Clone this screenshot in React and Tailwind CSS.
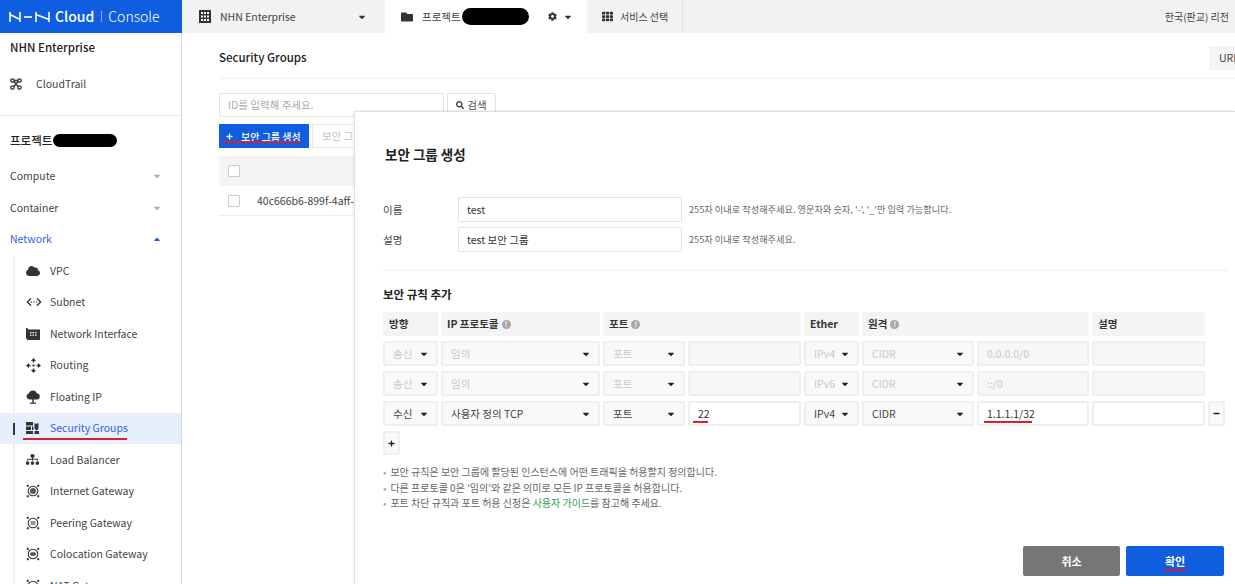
import React from "react";
import { FaCaretDown, FaCaretUp, FaCloud, FaCog, FaFolder, FaMinus, FaPlus, FaSearch, FaSitemap, FaTh } from "react-icons/fa";
import { ChevronsLeftRightEllipsis } from "lucide-react";

const font = { fontFamily: '"Noto Sans CJK KR", "Noto Sans", sans-serif' };

function NhnMark() {
  return (
    <svg width="42" height="12" viewBox="0 0 42 12" fill="none" stroke="white" strokeWidth="1.6">
      <path d="M1 1v10M1 3.500l10 5M11 1v10" />
      <path d="M15 6h8" />
      <path d="M27 1v10M27 3.500l13 5M40 1v10" />
    </svg>
  );
}

function BuildingIcon() {
  return (
    <svg width="12" height="13" viewBox="0 0 12 13" fill="#333">
      <path d="M0 0h12v13H0z" />
      <path fill="white" d="M2 2h2v2H2zM5 2h2v2H5zM8 2h2v2H8zM2 5.500h2v2H2zM5 5.500h2v2H5zM8 5.500h2v2H8zM2 9h2v2H2zM5 9h2v2H5zM8 9h2v2H8z" />
    </svg>
  );
}

function TrailIcon() {
  return (
    <svg width="12" height="12" viewBox="0 0 12 12" fill="none" stroke="#333" strokeWidth="1.300">
      <circle cx="2.500" cy="2.500" r="1.700" />
      <circle cx="9.500" cy="2.500" r="1.700" />
      <circle cx="2.500" cy="9.500" r="1.700" />
      <circle cx="9.500" cy="9.500" r="1.700" />
      <path d="M4 3.500l4 5M8 3.500l-4 5M4.200 2.500h3.600" />
    </svg>
  );
}

function InterfaceIcon() {
  return (
    <svg width="14" height="12" viewBox="0 0 14 12" fill="#333">
      <path d="M0 0h1.500l.5 1.500H14V12H1.500L0 10z" />
      <path fill="white" d="M4 4h1.500v1.200H4zM6.500 4H8v1.200H6.500zM9 4h1.500v1.200H9zM4 6.500h1.500v1.200H4zM6.500 6.500H8v1.200H6.500zM9 6.500h1.500v1.200H9z" />
    </svg>
  );
}

function RoutingIcon() {
  return (
    <svg width="15" height="15" viewBox="0 0 15 15" fill="#333">
      <path d="M7.500 0l2.600 3H8.300v1.500H6.700V3H4.900zM7.500 15l-2.600-3h1.800v-1.500h1.600V12h1.800zM0 7.500l3-2.600v1.800h1.500v1.600H3v1.800zM15 7.500l-3 2.600V8.300h-1.500V6.700H12V4.900z" />
      <rect x="6.500" y="6.500" width="2" height="2" />
    </svg>
  );
}

function FloatingIcon() {
  return (
    <svg width="14" height="14" viewBox="0 0 14 14" fill="#333">
      <path d="M3.500 9.500A3 3 0 0 1 2.800 3.600 4.300 4.300 0 0 1 11 3.500a3 3 0 0 1-.5 6z" />
      <rect x="6.300" y="9" width="1.400" height="4" />
      <rect x="4" y="12.600" width="6" height="1.200" />
    </svg>
  );
}

function SecurityIcon() {
  return (
    <svg width="13" height="12" viewBox="0 0 13 12" fill="#333">
      <path d="M0 0h7v3.500H0zM0 4.500h5V8H0zM0 9h7v3H0zM6 4.500h1.500V8H6z" />
      <path d="M8.500 1l2 1 2-1v4.500c0 1.500-1 2.500-2 3-1-.5-2-1.500-2-3zM8.500 9H13v3H8.500z" />
    </svg>
  );
}

function GatewayIcon({ kind }) {
  return (
    <svg width="14" height="14" viewBox="0 0 14 14" fill="none" stroke="#333">
      <circle cx="7" cy="7" r="4.800" strokeWidth="1.100" />
      <path d="M1 1h1.500v1.500H1zM11.500 1H13v1.500h-1.500zM1 11.500h1.500V13H1zM11.500 11.500H13V13h-1.500z" fill="#333" strokeWidth=".5" />
      {kind === "internet" && <circle cx="7" cy="7" r="2.800" fill="#555" strokeWidth=".4" />}
      {kind === "peering" && <path d="M4.500 6h5M4.500 8h5" strokeWidth="1" />}
      {kind === "colocation" && <rect x="4.200" y="5.500" width="5.600" height="3" rx="1.500" fill="#555" strokeWidth=".4" />}
      {kind === "nat" && <path d="M4.500 7h5" strokeWidth="1.200" />}
    </svg>
  );
}

const groups = [
  { name: "Compute" },
  { name: "Container" },
  { name: "Network", open: true },
];

const networkItems = [
  { name: "VPC", icon: <FaCloud className="text-[14px] text-[#333]" /> },
  { name: "Subnet", icon: <ChevronsLeftRightEllipsis size={16} strokeWidth={2} className="text-[#333]" /> },
  { name: "Network Interface", icon: <InterfaceIcon /> },
  { name: "Routing", icon: <RoutingIcon /> },
  { name: "Floating IP", icon: <FloatingIcon /> },
  { name: "Security Groups", icon: <SecurityIcon />, active: true },
  { name: "Load Balancer", icon: <FaSitemap className="text-[13px] text-[#333]" /> },
  { name: "Internet Gateway", icon: <GatewayIcon kind="internet" /> },
  { name: "Peering Gateway", icon: <GatewayIcon kind="peering" /> },
  { name: "Colocation Gateway", icon: <GatewayIcon kind="colocation" /> },
  { name: "NAT Gateway", icon: <GatewayIcon kind="nat" /> },
];

function Sidebar() {
  return (
    <aside className="w-[182px] shrink-0 border-r border-[#d9d9d9] bg-white text-[10.500px] text-[#444]">
      <div className="pl-[10px] pt-[6px] h-[83px] border-b border-[#e8e8e8]">
        <div className="text-[11.500px] font-medium leading-[16px] text-[#222]">NHN Enterprise</div>
        <div className="mt-[21px] flex items-center leading-[16px]">
          <TrailIcon />
          <span className="ml-[14px]">CloudTrail</span>
        </div>
      </div>
      <div className="pl-[10px] pt-[16px] h-[44.500px] flex items-start">
        <span className="relative text-[11.500px] font-medium leading-[16px] text-[#222]">프로젝트</span>
        <span className="ml-[1px] mt-[2px] h-[13px] w-[64px] rounded-full bg-black" />
      </div>
      {groups.map((g) => (
        <div key={g.name} className="h-[31.500px] pl-[10px] pr-[19px] flex items-center justify-between">
          <span className={g.open ? "text-[#2f62e8]" : ""}>{g.name}</span>
          {g.open ? <FaCaretUp className="text-[10px] text-[#1c5fe0]" /> : <FaCaretDown className="text-[10px] text-[#aaa]" />}
        </div>
      ))}
      <div className="ml-[13px] border-l-2 border-[#f0f0f0]">
        {networkItems.map((it) => (
          <div
            key={it.name}
            className={`relative h-[31.500px] ml-[-15px] pl-[26px] flex items-center ${it.active ? "bg-[#e8effc] text-[#2f62e8]" : ""}`}
          >
            {it.active && <span className="absolute left-[13px] top-[10px] h-[12px] w-[2px] bg-[#333]" />}
            <span className="w-[24px] flex justify-start">{it.icon}</span>
            <span>{it.name}</span>
            {it.active && <span className="absolute left-[23px] top-[25px] h-[2px] w-[104px] bg-[#d5202e]" />}
          </div>
        ))}
      </div>
    </aside>
  );
}

function TopBar() {
  return (
    <header className="h-[33px] flex bg-[#f2f2f2] text-[10.500px] text-[#444] shrink-0">
      <div className="w-[182px] bg-[#0f5ee0] flex items-center pl-[9px] text-white">
        <NhnMark />
        <span className="ml-[4px] text-[14px] font-medium">Cloud</span>
        <span className="ml-[7px] mr-[6px] h-[11px] w-px bg-[#8fb2ee]" />
        <span className="text-[14px] font-light">Console</span>
      </div>
      <div className="w-[203px] flex items-center pl-[17px] pr-[18px]">
        <BuildingIcon />
        <span className="flex-1 ml-[9px]">NHN Enterprise</span>
        <FaCaretDown className="text-[10px] text-[#333]" />
      </div>
      <div className="w-[202px] bg-white flex items-center pl-[16px]">
        <FaFolder className="text-[12px] text-[#333] mr-[9px]" />
        <span>프로젝트</span>
        <span className="h-[17px] w-[67px] rounded-full bg-black ml-[1px]" />
        <FaCog className="ml-[19px] text-[9px] text-[#333]" />
        <FaCaretDown className="ml-[6px] text-[10px] text-[#333]" />
      </div>
      <div className="w-[96px] border-r border-[#e2e2e2] flex items-center pl-[15px] text-[10px]">
        <FaTh className="text-[11px] text-[#333] mr-[7px]" />
        <span>서비스 선택</span>
      </div>
      <div className="flex-1 flex items-center justify-end pr-[6px] text-[10px]">
        <span>한국(판교) 리전</span>
      </div>
    </header>
  );
}

function Background() {
  return (
    <main className="flex-1 min-w-0 pl-[37px] text-[10.500px] text-[#444]">
      <div className="h-[46px] flex items-center justify-between border-b border-[#efefef] pt-[4px]">
        <h1 className="text-[11.500px] font-medium text-[#222]">Security Groups</h1>
        <span className="w-[26px] h-[24px] bg-[#f4f4f4] pl-[10px] leading-[24px] overflow-hidden">URL</span>
      </div>
      <div className="mt-[14px] flex gap-[3px]">
        <div className="w-[225px] h-[24px] border border-[#e3e3e3] rounded-[2px] pl-[8px] leading-[22px] text-[#aaa]">ID를 입력해 주세요.</div>
        <div className="w-[49px] h-[24px] border border-[#e3e3e3] rounded-[2px] flex items-center justify-center gap-[3px] text-[#555]">
          <FaSearch className="text-[8px] text-[#333]" />
          <span>검색</span>
        </div>
      </div>
      <div className="mt-[7px] flex gap-[3px]">
        <div className="relative w-[90px] h-[24px] bg-[#0f5ee0] rounded-[1px] flex items-center pl-[7px] text-white font-medium text-[10px]">
          <FaPlus className="text-[7px] mr-[8px]" />
          <span>보안 그룹 생성</span>
          <span className="absolute left-[4px] top-[17px] h-[2px] w-[78px] bg-[#d5202e]" />
        </div>
        <div className="w-[60px] h-[24px] border border-[#e8e8e8] pl-[9px] leading-[22px] text-[#c4c4c4]">보안 그룹</div>
      </div>
      <div className="mt-[8px] h-[30px] bg-[#f4f4f4] flex items-center pl-[9px]">
        <span className="w-[12px] h-[12px] mt-[-1px] bg-white border border-[#ccc] rounded-[1px]" />
      </div>
      <div className="h-[30px] border-b border-[#eee] flex items-center pl-[9px]">
        <span className="w-[12px] h-[12px] bg-white border border-[#ccc] rounded-[1px]" />
        <span className="ml-[17px] whitespace-nowrap">40c666b6-899f-4aff-85</span>
      </div>
    </main>
  );
}

function Select({ label, disabled }) {
  return (
    <div
      className={`h-[25px] flex items-center justify-between pl-[8px] pr-[7px] border-2 border-[#efefef] rounded-[2px] bg-[#f9f9f9] ${disabled ? "text-[#c8c8c8]" : "text-[#444]"}`}
    >
      <span>{label}</span>
      <FaCaretDown className="text-[10px] text-[#222]" />
    </div>
  );
}

function Field({ value, disabled, markClass }) {
  return (
    <div
      className={`relative h-[25px] pl-[8px] leading-[21px] border-2 border-[#efefef] rounded-[2px] ${disabled ? "bg-[#f7f7f7] text-[#c8c8c8]" : "bg-white text-[#333]"}`}
    >
      {value}
      {markClass && <span className={`absolute bottom-[1px] h-[2px] bg-[#d5202e] ${markClass}`} />}
    </div>
  );
}

function Info() {
  return (
    <span className="ml-[3px] inline-flex w-[9px] h-[9px] rounded-full bg-[#a8a8a8] text-white text-[7px] leading-[9px] justify-center font-bold">!</span>
  );
}

function RuleRow({ dir, proto, ether, port, remote, disabled, extra }) {
  return (
    <>
      <Select label={dir} disabled={disabled} />
      <Select label={proto} disabled={disabled} />
      <Select label="포트" disabled={disabled} />
      <Field value={port} disabled={disabled} markClass={disabled ? "" : "left-[3px] w-[15px]"} />
      <Select label={ether} disabled={disabled} />
      <Select label="CIDR" disabled={disabled} />
      <Field value={remote} disabled={disabled} markClass={disabled ? "" : "left-[5px] w-[48px]"} />
      <Field value="" disabled={disabled} />
      {extra || <span />}
    </>
  );
}

function Modal() {
  const head = "h-[24px] bg-[#f4f4f4] pl-[6px] flex items-center font-bold text-[#333]";
  return (
    <section className="absolute left-[354px] top-[111px] right-0 bottom-0 bg-white border-l border-t border-[#ddd] shadow-[0_0_3px_rgba(0,0,0,0.12)] rounded-tl-[2px] pl-[28px] pr-[8px] text-[10.500px] text-[#444]">
      <h2 className="mt-[32px] ml-[2px] text-[13.500px] font-bold leading-[20px] text-[#222]">보안 그룹 생성</h2>

      <div className="mt-[33px] flex items-center">
        <span className="w-[75px]">이름</span>
        <div className="w-[224px] h-[25px] border border-[#e3e3e3] rounded-[1px] pl-[8px] leading-[23px] text-[#333]">test</div>
        <span className="ml-[7px] text-[9.200px] text-[#666]">255자 이내로 작성해주세요. 영문자와 숫자, '-', '_'만 입력 가능합니다.</span>
      </div>
      <div className="mt-[5px] flex items-center">
        <span className="w-[75px]">설명</span>
        <div className="w-[224px] h-[25px] border border-[#e3e3e3] rounded-[1px] pl-[8px] leading-[23px] text-[#333]">test 보안 그룹</div>
        <span className="ml-[7px] text-[9.200px] text-[#666]">255자 이내로 작성해주세요.</span>
      </div>

      <div className="mt-[18px] border-t border-[#eee] pt-[15px]">
        <h3 className="text-[11.500px] font-bold leading-[16px] text-[#222]">보안 규칙 추가</h3>
      </div>

      <div className="mt-[10px] grid grid-cols-[55px_159px_82px_113px_55px_112px_112px_113px_17px] gap-x-[3px] gap-y-[5px]">
        <div className={head}>방향</div>
        <div className={head}>IP 프로토콜<Info /></div>
        <div className={`${head} col-span-2`}>포트<Info /></div>
        <div className={head}>Ether</div>
        <div className={`${head} col-span-2`}>원격<Info /></div>
        <div className={head}>설명</div>
        <span />
        <RuleRow dir="송신" proto="임의" ether="IPv4" port="" remote="0.0.0.0/0" disabled />
        <RuleRow dir="송신" proto="임의" ether="IPv6" port="" remote="::/0" disabled />
        <RuleRow
          dir="수신"
          proto="사용자 정의 TCP"
          ether="IPv4"
          port="22"
          remote="1.1.1.1/32"
          extra={
            <div className="h-[25px] border-2 border-[#efefef] rounded-[2px] bg-[#f9f9f9] flex items-center justify-center">
              <FaMinus className="text-[7px] text-[#222]" />
            </div>
          }
        />
      </div>

      <div className="mt-[5px] w-[17px] h-[24px] border-2 border-[#efefef] rounded-[2px] bg-[#f9f9f9] flex items-center justify-center">
        <FaPlus className="text-[7px] text-[#222]" />
      </div>

      <ul className="mt-[9px] text-[10px] leading-[15.500px] text-[#666]">
        <li><span className="text-[#aaa] mr-[4px]">•</span>보안 규칙은 보안 그룹에 할당된 인스턴스에 어떤 트래픽을 허용할지 정의합니다.</li>
        <li><span className="text-[#aaa] mr-[4px]">•</span>다른 프로토콜 0은 '임의'와 같은 의미로 모든 IP 프로토콜을 허용합니다.</li>
        <li><span className="text-[#aaa] mr-[4px]">•</span>포트 차단 규칙과 포트 허용 신청은 <span className="text-[#2e9e4f]">사용자 가이드</span>를 참고해 주세요.</li>
      </ul>

      <div className="absolute right-[11px] top-[434px] flex gap-[6px] font-bold text-white text-[11px]">
        <div className="w-[97px] h-[30px] rounded-[2px] bg-[#767676] flex items-center justify-center">취소</div>
        <div className="relative w-[98px] h-[30px] rounded-[2px] bg-[#0f5ee0] flex items-center justify-center">
          확인
          <span className="absolute left-[38px] top-[23px] h-[2px] w-[22px] bg-[#d5202e]" />
        </div>
      </div>
    </section>
  );
}

export default function App() {
  return (
    <div style={font} className="relative w-[1235px] h-[584px] overflow-hidden bg-white flex flex-col">
      <TopBar />
      <div className="flex-1 min-h-0 flex">
        <Sidebar />
        <Background />
      </div>
      <Modal />
    </div>
  );
}
